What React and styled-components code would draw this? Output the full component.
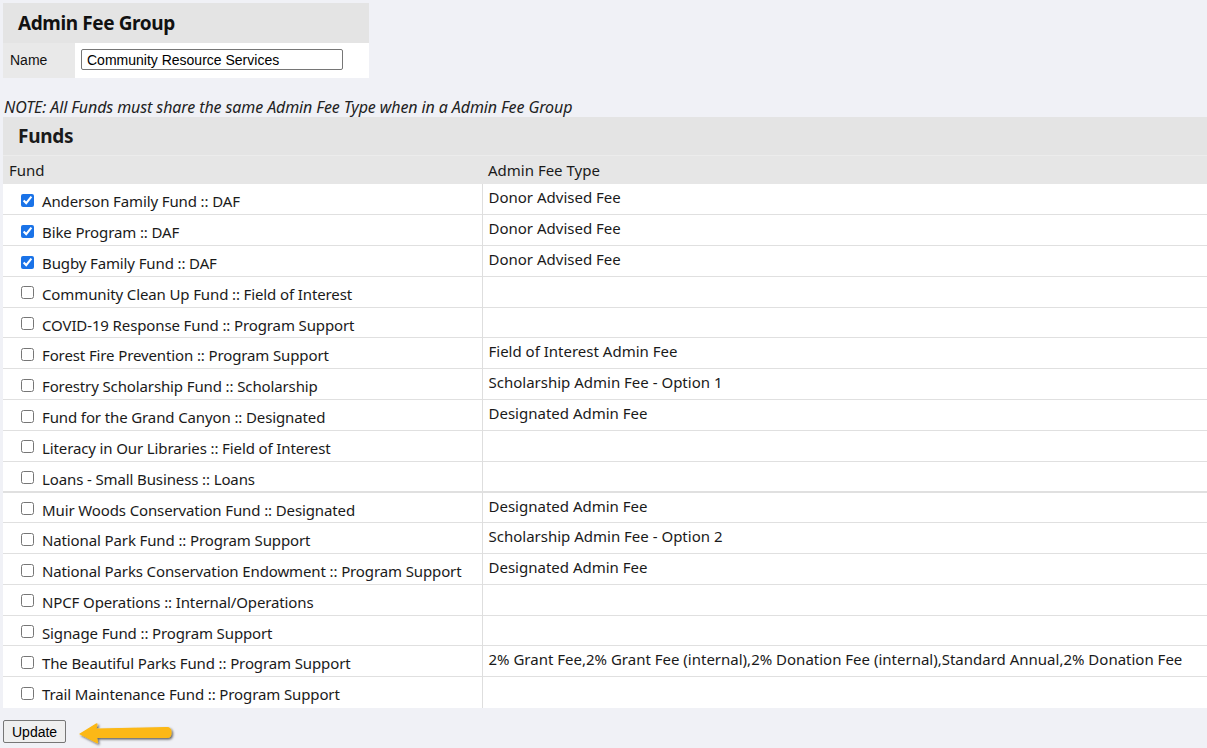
import styled, { createGlobalStyle } from "styled-components"

const funds = [
    { name: "Anderson Family Fund :: DAF", fee: "Donor Advised Fee", checked: true },
    { name: "Bike Program :: DAF", fee: "Donor Advised Fee", checked: true },
    { name: "Bugby Family Fund :: DAF", fee: "Donor Advised Fee", checked: true },
    { name: "Community Clean Up Fund :: Field of Interest", fee: "" },
    { name: "COVID-19 Response Fund :: Program Support", fee: "" },
    { name: "Forest Fire Prevention :: Program Support", fee: "Field of Interest Admin Fee" },
    { name: "Forestry Scholarship Fund :: Scholarship", fee: "Scholarship Admin Fee - Option 1" },
    { name: "Fund for the Grand Canyon :: Designated", fee: "Designated Admin Fee" },
    { name: "Literacy in Our Libraries :: Field of Interest", fee: "" },
    { name: "Loans - Small Business :: Loans", fee: "" },
    { name: "Muir Woods Conservation Fund :: Designated", fee: "Designated Admin Fee", thick: true },
    { name: "National Park Fund :: Program Support", fee: "Scholarship Admin Fee - Option 2" },
    { name: "National Parks Conservation Endowment :: Program Support", fee: "Designated Admin Fee" },
    { name: "NPCF Operations :: Internal/Operations", fee: "" },
    { name: "Signage Fund :: Program Support", fee: "" },
    { name: "The Beautiful Parks Fund :: Program Support", fee: "2% Grant Fee,2% Grant Fee (internal),2% Donation Fee (internal),Standard Annual,2% Donation Fee" },
    { name: "Trail Maintenance Fund :: Program Support", fee: "" },
]

const GlobalStyle = createGlobalStyle`
    html, body {
        margin: 0;
        background: #f0f1f6;
        font-family: "Liberation Sans", Arial, sans-serif;
        font-size: 14px;
        color: #111;
    }
`

const Page = styled.div`
    padding: 3px 0 6px 3px;
`

const GroupBox = styled.table`
    border-collapse: collapse;
    width: 366px;

    th {
        background: #e4e4e4;
        text-align: left;
        font-family: "Noto Sans", sans-serif;
        font-size: 19px;
        font-weight: 700;
        height: 40px;
        padding: 0 0 0 15px;
        letter-spacing: -0.4px;
    }

    td.label {
        background: #e9e9e9;
        width: 72px;
        padding: 0 0 2px 7px;
        box-sizing: border-box;
        height: 35px;
    }

    td.value {
        background: #fff;
        padding: 0 0 2px 6px;
    }
`

const TextInput = styled.input`
    width: 262px;
    height: 21px;
    box-sizing: border-box;
    font-family: "Liberation Sans", Arial, sans-serif;
    font-size: 14px;
    padding: 0 5px;
    border: 1px solid #767676;
    border-radius: 2px;
    color: #000;
    display: block;
`

const Note = styled.p`
    margin: 20px 0 0 1px;
    font-family: "Noto Sans", sans-serif;
    font-style: italic;
    font-size: 16px;
    letter-spacing: -0.1px;
    line-height: 19px;
    color: #222;
`

const FundsTable = styled.table`
    border-collapse: collapse;
    width: 1204px;
    font-family: "Noto Sans", sans-serif;
    font-size: 15px;
    letter-spacing: 0;
    color: #1a1a1a;

    caption {
        background: #e4e4e4;
        text-align: left;
        font-size: 19px;
        font-weight: 700;
        height: 38px;
        line-height: 38px;
        padding-left: 15px;
        border-bottom: 1px solid #ececec;
        letter-spacing: -0.3px;
    }

    thead th {
        background: #e6e6e6;
        text-align: left;
        font-weight: 400;
        height: 28px;
        padding: 0 0 0 6px;
    }

    tbody td {
        background: #fff;
        vertical-align: top;
        height: 30.8px;
        box-sizing: border-box;
        border-top: 1px solid #e0e0e0;
        line-height: 19px;
        padding: 0;
    }

    tbody tr:first-child td {
        border-top: none;
    }
`

const Row = styled.tr`
    td {
        border-top-width: ${(p) => (p.$thick ? "2px" : "1px")} !important;
    }
`

const FundCell = styled.td`
    width: 479px;
    border-right: 1px solid #dedede;
`

const FundLabel = styled.label`
    display: flex;
    align-items: center;
    gap: 8px;
    padding: 8px 0 0 18px;
    letter-spacing: -0.12px;

    input {
        margin: -3px 0 0 0;
        width: 13px;
        height: 13px;
        accent-color: #1a73e8;
    }
`

const FeeCell = styled.td`
    padding: 4px 0 0 6px !important;
`

const Footer = styled.div`
    display: flex;
    align-items: center;
    gap: 10px;
    margin-top: 9px;
`

const Button = styled.button`
    font-family: "Liberation Sans", Arial, sans-serif;
    font-size: 14px;
    height: 23px;
    padding: 0 8px;
    background: #efefef;
    border: 1px solid #767676;
    border-radius: 2px;
    color: #000;
`

function Arrow() {
    return (
        <svg width="100" height="26" viewBox="0 0 100 26" style={{ marginTop: 4 }}>
            <defs>
                <filter id="sh" x="-20%" y="-50%" width="140%" height="200%">
                    <feDropShadow dx="1.5" dy="1.5" stdDeviation="1" floodColor="#000" floodOpacity="0.6" />
                </filter>
            </defs>
            <path
                d="M3 13 L20 2.5 Q22 1.5 21.5 4 L20.5 7.5 L91 6 Q95.5 6 95.5 11.5 Q95.5 17 91 17 L21 17 L22 21 Q22.5 23 20.5 22 Z"
                fill="#fcb812"
                filter="url(#sh)"
            />
        </svg>
    )
}

function App() {
    return (
        <>
            <GlobalStyle />
            <Page>
                <GroupBox>
                    <thead>
                        <tr><th colSpan={2}>Admin Fee Group</th></tr>
                    </thead>
                    <tbody>
                        <tr>
                            <td className="label">Name</td>
                            <td className="value">
                                <TextInput defaultValue="Community Resource Services" />
                            </td>
                        </tr>
                    </tbody>
                </GroupBox>

                <Note>NOTE: All Funds must share the same Admin Fee Type when in a Admin Fee Group</Note>

                <FundsTable>
                    <caption>Funds</caption>
                    <thead>
                        <tr>
                            <th>Fund</th>
                            <th>Admin Fee Type</th>
                        </tr>
                    </thead>
                    <tbody>
                        {funds.map((f) => (
                            <Row key={f.name} $thick={f.thick}>
                                <FundCell>
                                    <FundLabel>
                                        <input type="checkbox" defaultChecked={!!f.checked} />
                                        {f.name}
                                    </FundLabel>
                                </FundCell>
                                <FeeCell>{f.fee}</FeeCell>
                            </Row>
                        ))}
                    </tbody>
                </FundsTable>

                <Footer>
                    <Button>Update</Button>
                    <Arrow />
                </Footer>
            </Page>
        </>
    )
}

export default App
